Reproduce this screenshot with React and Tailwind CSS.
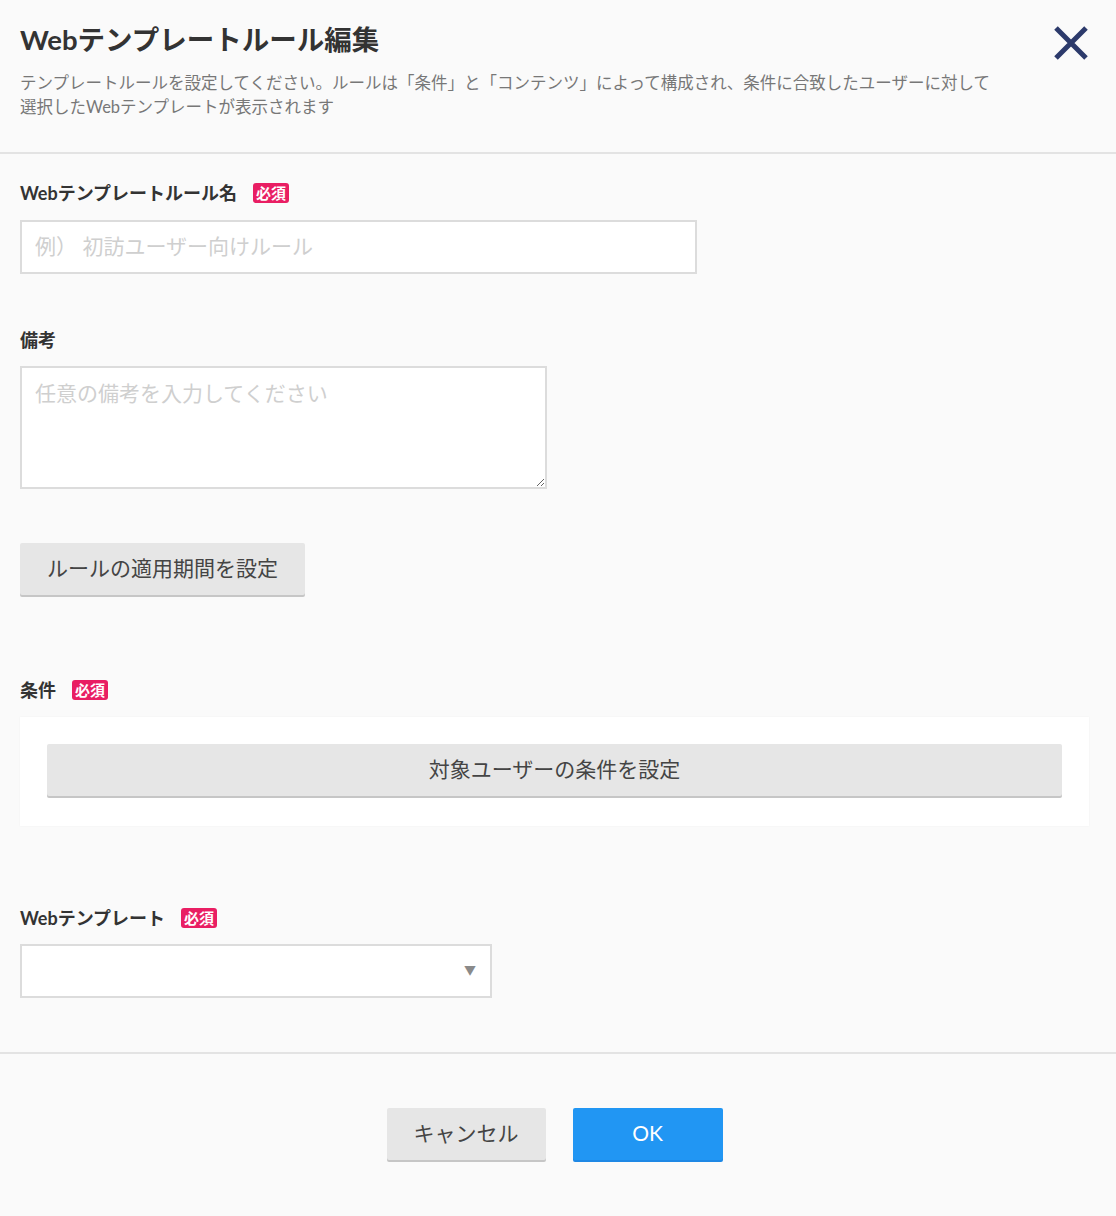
const font = {
  fontFamily: 'Lato, "Noto Sans CJK JP", sans-serif',
};

const Required = () => (
  <span className="ml-[16px] inline-flex h-5 items-center rounded-[3px] bg-[#e91e63] px-[3px] text-[15px] font-bold leading-none text-white">
    必須
  </span>
);

const Label = ({ children, required }) => (
  <div className="flex h-6 items-center text-[18px] font-bold text-[#333]">
    {children}
    {required && <Required />}
  </div>
);

const GrayButton = ({ children, className = "" }) => (
  <button
    className={`h-[52px] rounded-[2px] bg-[#e6e6e6] pb-[3px] text-[21px] text-[#444] shadow-[0_2px_0_#c6c6c6] ${className}`}
  >
    {children}
  </button>
);

export default function App() {
  return (
    <div className="min-h-[1216px] bg-[#fafafa]" style={font}>
      <div className="flex justify-between pb-[33px] pl-5 pr-[27px] pt-5">
        <div>
          <h1 className="h-10 text-[27.5px] font-bold leading-10 text-[#333]">
            Webテンプレートルール編集
          </h1>
          <p className="mt-[11px] text-[16.5px] leading-6 text-[#777]">
            テンプレートルールを設定してください。ルールは「条件」と「コンテンツ」によって構成され、条件に合致したユーザーに対して
            <br />
            選択したWebテンプレートが表示されます
          </p>
        </div>
        <button className="mt-[5px] h-9 w-9 shrink-0">
          <svg viewBox="0 0 36 36" className="h-9 w-9">
            <path
              d="M3 3 L33 33 M33 3 L3 33"
              stroke="#2c3a6b"
              strokeWidth="5"
              fill="none"
            />
          </svg>
        </button>
      </div>

      <div className="h-[2px] bg-[#e3e3e3]" />

      <div className="pb-[54px] pl-5 pr-[27px] pt-[27px]">
        <Label required>Webテンプレートルール名</Label>
        <input
          className="mt-[15px] block h-[54px] w-[677px] border-2 border-[#dcdcdc] bg-white px-[13px] pb-[3px] text-[21px] text-[#333] outline-none placeholder:text-[#cfcfcf]"
          placeholder="例） 初訪ユーザー向けルール"
        />

        <div className="mt-[54px]">
          <Label>備考</Label>
        </div>
        <textarea
          className="mt-[14px] block h-[123px] w-[527px] border-2 border-[#dcdcdc] bg-white px-[13px] py-[11px] text-[21px] leading-7 text-[#333] outline-none placeholder:text-[#cfcfcf]"
          placeholder="任意の備考を入力してください"
        />

        <GrayButton className="mt-[54px] block w-[285px]">
          ルールの適用期間を設定
        </GrayButton>

        <div className="mt-[83px]">
          <Label required>条件</Label>
        </div>
        <div className="mt-[15px] bg-white px-[27px] pb-[30px] pt-[27px] shadow-[0_0_2px_rgba(0,0,0,0.04)]">
          <GrayButton className="block w-full">対象ユーザーの条件を設定</GrayButton>
        </div>

        <div className="mt-[80px]">
          <Label required>Webテンプレート</Label>
        </div>
        <div className="mt-[14px] flex h-[54px] w-[472px] items-center justify-end border-2 border-[#dcdcdc] bg-white pr-[14px]">
          <span className="text-[12px] leading-none text-[#8a8a8a]">▼</span>
        </div>
      </div>

      <div className="h-[2px] bg-[#e3e3e3]" />

      <div className="flex justify-center gap-[27px] pb-[54px] pl-5 pr-[27px] pt-[54px]">
        <GrayButton className="w-[159px]">キャンセル</GrayButton>
        <button className="h-[52px] w-[150px] rounded-[2px] bg-[#2196f3] pb-[3px] text-[21px] text-white shadow-[0_2px_0_#1e88e5]">
          OK
        </button>
      </div>
    </div>
  );
}
